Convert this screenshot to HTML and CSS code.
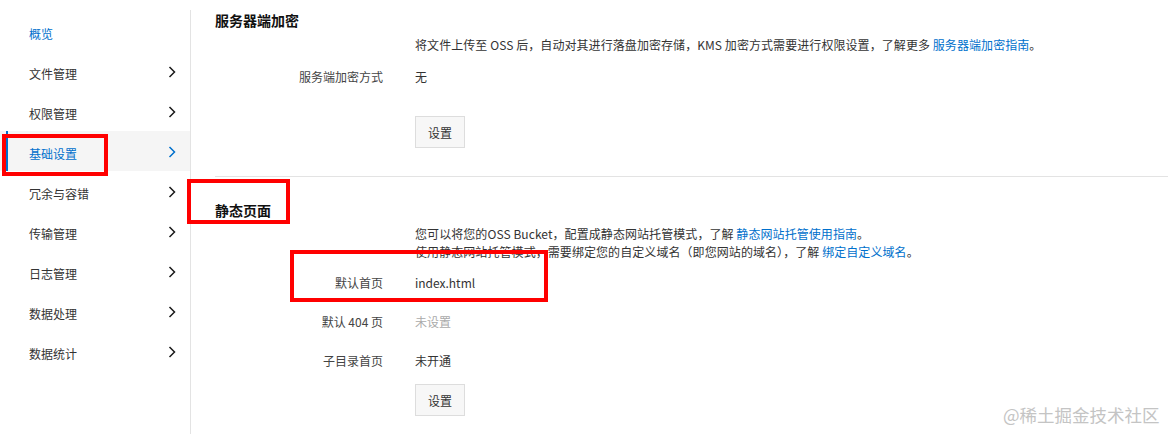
FILE: index.html
```html
<!DOCTYPE html>
<html lang="zh-CN">
<head>
<meta charset="utf-8">
<title>基础设置</title>
<link rel="stylesheet" href="styles.css">
</head>
<body>
<div class="page">
  <aside class="sidebar">
    <a class="nav-item link">概览</a>
    <a class="nav-item">文件管理<svg class="chev" viewBox="0 0 8 12"><path d="M1.5 1 L6.5 6 L1.5 11"/></svg></a>
    <a class="nav-item">权限管理<svg class="chev" viewBox="0 0 8 12"><path d="M1.5 1 L6.5 6 L1.5 11"/></svg></a>
    <a class="nav-item active">基础设置<svg class="chev" viewBox="0 0 8 12"><path d="M1.5 1 L6.5 6 L1.5 11"/></svg></a>
    <a class="nav-item">冗余与容错<svg class="chev" viewBox="0 0 8 12"><path d="M1.5 1 L6.5 6 L1.5 11"/></svg></a>
    <a class="nav-item">传输管理<svg class="chev" viewBox="0 0 8 12"><path d="M1.5 1 L6.5 6 L1.5 11"/></svg></a>
    <a class="nav-item">日志管理<svg class="chev" viewBox="0 0 8 12"><path d="M1.5 1 L6.5 6 L1.5 11"/></svg></a>
    <a class="nav-item">数据处理<svg class="chev" viewBox="0 0 8 12"><path d="M1.5 1 L6.5 6 L1.5 11"/></svg></a>
    <a class="nav-item">数据统计<svg class="chev" viewBox="0 0 8 12"><path d="M1.5 1 L6.5 6 L1.5 11"/></svg></a>
  </aside>
  <main class="main">
    <section class="section s1">
      <h2 class="title">服务器端加密</h2>
      <div class="desc">将文件上传至 OSS 后，自动对其进行落盘加密存储，KMS 加密方式需要进行权限设置，了解更多 <a class="link">服务器端加密指南</a>。</div>
      <div class="row r1"><span class="label">服务端加密方式</span><span class="value">无</span></div>
      <div class="btn-row b1"><button class="btn">设置</button></div>
    </section>
    <hr class="divider">
    <section class="section s2">
      <h2 class="title">静态页面</h2>
      <div class="desc">您可以将您的OSS Bucket，配置成静态网站托管模式，了解 <a class="link">静态网站托管使用指南</a>。<br>使用静态网站托管模式，需要绑定您的自定义域名（即您网站的域名），了解 <a class="link">绑定自定义域名</a>。</div>
      <div class="row r2"><span class="label">默认首页</span><span class="value">index.html</span></div>
      <div class="row r3"><span class="label">默认 404 页</span><span class="value muted">未设置</span></div>
      <div class="row r3"><span class="label">子目录首页</span><span class="value">未开通</span></div>
      <div class="btn-row b2"><button class="btn">设置</button></div>
    </section>
  </main>
</div>
<div class="mark mark-a"></div>
<div class="mark mark-b"></div>
<div class="mark mark-c"></div>
<div class="watermark">@稀土掘金技术社区</div>
</body>
</html>
```
FILE: styles.css
```css
* { box-sizing: border-box; }
html, body { margin: 0; padding: 0; background: #fff; }
body {
  width: 1168px;
  height: 434px;
  overflow: hidden;
  position: relative;
  font-family: "Noto Sans CJK SC", "Microsoft YaHei", sans-serif;
  font-size: 12px;
  color: #333;
}
.page { display: flex; align-items: flex-start; }
.sidebar {
  width: 191px;
  flex: none;
  margin-top: 10px;
  padding-top: 1px;
  border-right: 1px solid #e3e3e3;
  min-height: 424px;
  display: flex;
  flex-direction: column;
}
.nav-item {
  height: 40px;
  display: flex;
  align-items: center;
  justify-content: space-between;
  padding: 4px 14px 0 29px;
  font-size: 12px;
  color: #333;
  text-decoration: none;
}
.nav-item.link { color: #0070cc; }
.nav-item.active {
  color: #0070cc;
  background: #f5f5f5 linear-gradient(#0070cc, #0070cc) 6px 0 / 2px 100% no-repeat;
}
.chev { width: 8px; height: 12px; margin-top: -2px; }
.chev path { fill: none; stroke: #1a1a1a; stroke-width: 1.5; }
.nav-item.active .chev path { stroke: #0070cc; }

.main { flex: 1; padding-left: 24px; }
.section { display: flex; flex-direction: column; }
.title {
  margin: 0;
  font-size: 14px;
  line-height: 20px;
  font-weight: bold;
  color: #111;
}
.s1 { padding-top: 10px; }
.s1 .desc { margin-top: 6px; }
.s2 { padding-top: 23px; }
.s2 .desc { margin-top: 5px; }
.desc { padding-left: 200px; line-height: 18px; letter-spacing: 0.07px; }
.link { color: #0070cc; text-decoration: none; }
.row { display: flex; line-height: 18px; }
.r1 { margin-top: 14px; }
.r2 { margin-top: 13px; }
.r3 { margin-top: 21px; }
.label { width: 168px; text-align: right; color: #444; }
.value { margin-left: 32px; color: #333; }
.value.muted { color: #aaa; }
.btn-row { padding-left: 200px; }
.b1 { margin-top: 30px; }
.b2 { margin-top: 14px; }
.btn {
  width: 50px;
  height: 32px;
  border: 1px solid #ddd;
  background: #f7f7f7;
  font-family: inherit;
  font-size: 12px;
  color: #333;
  padding: 0;
}
.divider {
  margin: 28px 0 0;
  border: 0;
  border-top: 1px solid #e3e3e3;
  height: 0;
}

.mark { position: absolute; border: 4px solid #ff0000; }
.mark-a { left: 2px; top: 134px; width: 106px; height: 42px; }
.mark-b { left: 187px; top: 179px; width: 103px; height: 45px; }
.mark-c { left: 290px; top: 250px; width: 258px; height: 52px; }
.watermark {
  position: absolute;
  left: 1003px;
  top: 403px;
  font-size: 17.5px;
  line-height: 24px;
  color: #c4c4c4;
  white-space: nowrap;
}
```
